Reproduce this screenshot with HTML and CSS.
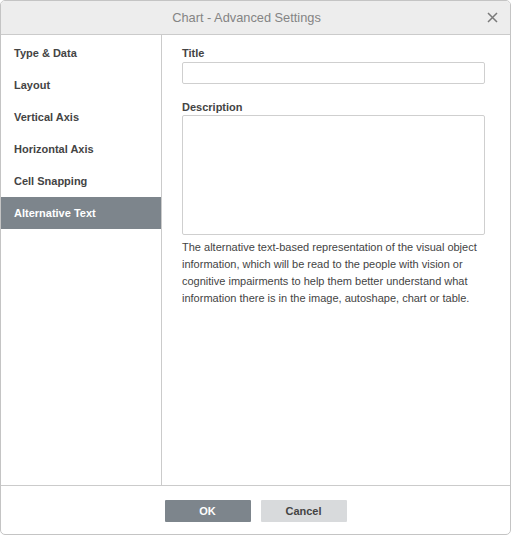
FILE: index.html
```html
<!DOCTYPE html>
<html>
<head>
<meta charset="utf-8">
<link rel="stylesheet" href="styles.css">
</head>
<body>
<div class="dialog">
  <div class="header">
    <span class="title">Chart - Advanced Settings</span>
    <span class="close">
      <svg width="11" height="11" viewBox="0 0 11 11"><path d="M1 1L10 10M10 1L1 10" stroke="#7a7a7a" stroke-width="1.5" fill="none"/></svg>
    </span>
  </div>
  <div class="body">
    <div class="nav">
      <div class="nav-item">Type &amp; Data</div>
      <div class="nav-item">Layout</div>
      <div class="nav-item">Vertical Axis</div>
      <div class="nav-item">Horizontal Axis</div>
      <div class="nav-item">Cell Snapping</div>
      <div class="nav-item active">Alternative Text</div>
    </div>
    <div class="content">
      <label class="label">Title</label>
      <div class="input"></div>
      <label class="label label-desc">Description</label>
      <div class="textarea"></div>
      <p class="help">The alternative text-based representation of the visual object information, which will be read to the people with vision or cognitive impairments to help them better understand what information there is in the image, autoshape, chart or table.</p>
    </div>
  </div>
  <div class="footer">
    <button class="btn primary">OK</button>
    <button class="btn">Cancel</button>
  </div>
</div>
</body>
</html>
```
FILE: styles.css
```css
* { box-sizing: border-box; }
html, body { margin: 0; padding: 0; background: #fff; }
body { font-family: "Liberation Sans", Arial, sans-serif; font-size: 11px; color: #444; }
.dialog {
  width: 511px; height: 535px;
  border: 1px solid #c4c4c4; border-radius: 5px;
  display: flex; flex-direction: column; overflow: hidden;
}
.header {
  height: 34px; flex: none;
  background: #ededed; border-bottom: 1px solid #cbcbcb;
  display: flex; align-items: center; justify-content: center;
  padding-right: 18px;
  position: relative;
}
.title { font-size: 12.8px; color: #848484; }
.close { position: absolute; right: 12px; top: 11px; width: 11px; height: 11px; display: block; }
.close svg { display: block; }
.body { flex: 1; display: flex; border-bottom: 1px solid #cbcbcb; }
.nav { width: 161px; flex: none; border-right: 1px solid #cbcbcb; padding-top: 2px; }
.nav-item { height: 32px; line-height: 32px; padding-left: 13px; font-weight: bold; color: #444; }
.nav-item.active { background: #7d858c; color: #fff; }
.content { flex: 1; padding: 11px 0 0 20px; }
.label { display: block; height: 15px; line-height: 15px; font-weight: bold; color: #444; }
.input { width: 303px; height: 22px; border: 1px solid #cfcfcf; border-radius: 2px; margin-top: 1px; }
.label-desc { margin-top: 16px; }
.textarea { width: 303px; height: 120px; border: 1px solid #cfcfcf; border-radius: 2px; margin-top: 0; }
.help { margin: 4px 0 0; width: 310px; line-height: 17px; color: #444; }
.footer { height: 48px; flex: none; display: flex; justify-content: center; gap: 10px; padding-top: 14px; }
.btn {
  width: 86px; height: 22px; border: none; border-radius: 1px;
  font-family: "Liberation Sans", Arial, sans-serif; font-size: 11px; font-weight: bold;
  background: #d8dadc; color: #444; padding: 0;
}
.btn.primary { background: #7d858c; color: #fff; }
```
